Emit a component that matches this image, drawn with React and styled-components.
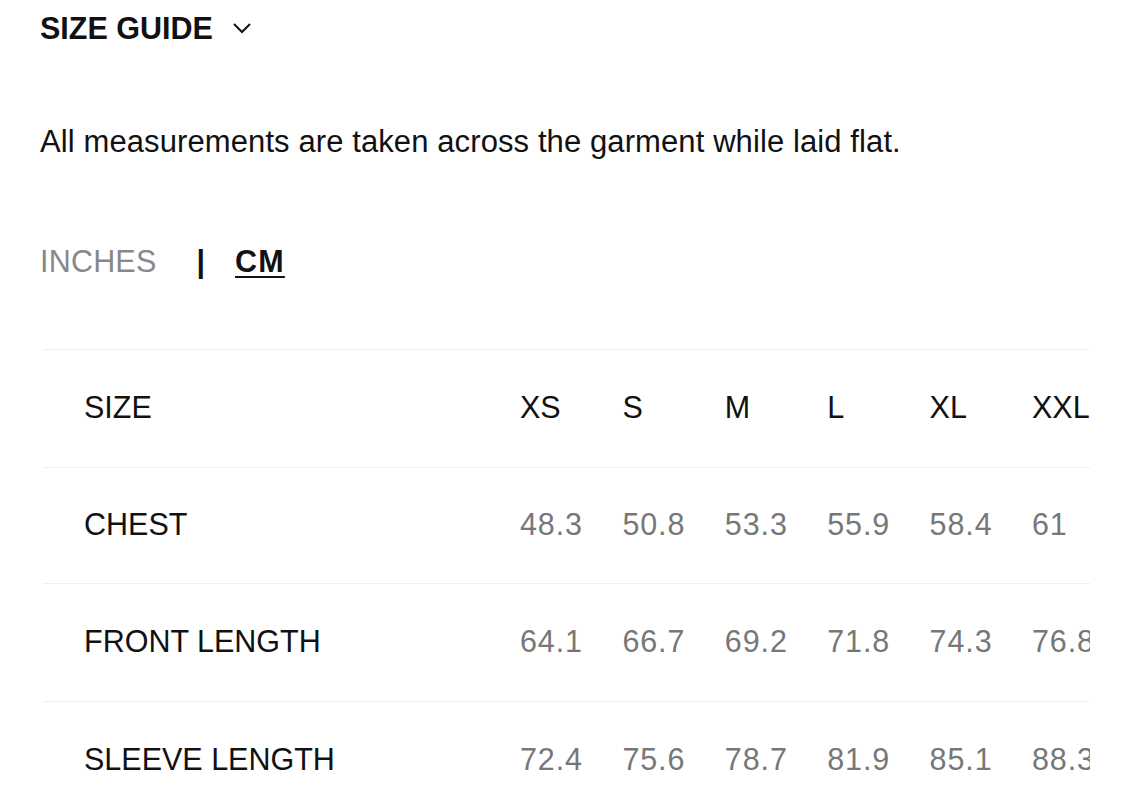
import React from "react";
import styled, { createGlobalStyle } from "styled-components";

const Global = createGlobalStyle`
  html, body { margin: 0; padding: 0; background: #fff; }
  body { font-family: "Liberation Sans", Arial, Helvetica, sans-serif; color: #111; }
`;

const Page = styled.div`
  padding: 0 0 0 40px;
  width: 1125px;
  box-sizing: border-box;
  overflow: hidden;
`;

const Header = styled.button`
  display: flex;
  align-items: center;
  gap: 19px;
  height: 56px;
  padding: 0;
  border: none;
  background: none;
  font-family: inherit;
  font-size: 30.5px;
  font-weight: 700;
  letter-spacing: 0;
  color: #111;
  cursor: pointer;
`;

const Note = styled.p`
  margin: 68px 0 0;
  font-size: 31px;
  line-height: 36px;
  letter-spacing: 0.1px;
  color: #111;
`;

const Units = styled.div`
  display: flex;
  align-items: center;
  margin-top: 83px;
  height: 36px;
  font-size: 30.5px;
`;

const Unit = styled.span`
  color: ${(p) => (p.$active ? "#111" : "#888")};
  font-weight: ${(p) => (p.$active ? 700 : 400)};
  text-decoration: ${(p) => (p.$active ? "underline" : "none")};
  text-decoration-thickness: 2px;
  text-underline-offset: 4px;
  letter-spacing: ${(p) => (p.$active ? "1.2px" : "0.2px")};
`;

const Divider = styled.span`
  font-weight: 700;
  color: #111;
  margin: 0 30px 0 40px;
`;

const TableWrap = styled.div`
  margin: 70px 0 0 3px;
  width: 1047px;
  overflow: hidden;
`;

const Row = styled.div`
  display: grid;
  grid-template-columns: 477px repeat(6, 102.4px);
  align-items: center;
  box-sizing: border-box;
  height: ${(p) => p.$h}px;
  padding-bottom: 3px;
  border-top: 1px solid #efefef;
  width: 1092px;
  font-size: 30.5px;
`;

const Label = styled.div`
  padding-left: 41px;
  color: #111;
  letter-spacing: 0;
`;

const Cell = styled.div`
  color: ${(p) => (p.$head ? "#111" : "#777")};
  white-space: nowrap;
  letter-spacing: ${(p) => (p.$head ? "0" : "0.9px")};
`;

const Chevron = () => (
  <svg width="20" height="14" viewBox="0 0 20 14" fill="none">
    <path d="M2 3 L10 11 L18 3" stroke="#111" strokeWidth="2" />
  </svg>
);

const sizes = ["XS", "S", "M", "L", "XL", "XXL"];
const rows = [
  { label: "CHEST", values: ["48.3", "50.8", "53.3", "55.9", "58.4", "61"], h: 116 },
  { label: "FRONT LENGTH", values: ["64.1", "66.7", "69.2", "71.8", "74.3", "76.8"], h: 118 },
  { label: "SLEEVE LENGTH", values: ["72.4", "75.6", "78.7", "81.9", "85.1", "88.3"], h: 118 },
];

export default function App() {
  return (
    <Page>
      <Global />
      <Header>
        SIZE GUIDE <Chevron />
      </Header>
      <Note>All measurements are taken across the garment while laid flat.</Note>
      <Units>
        <Unit>INCHES</Unit>
        <Divider>|</Divider>
        <Unit $active>CM</Unit>
      </Units>
      <TableWrap>
        <Row $h={118}>
          <Label>SIZE</Label>
          {sizes.map((s) => (
            <Cell key={s} $head>
              {s}
            </Cell>
          ))}
        </Row>
        {rows.map((r) => (
          <Row key={r.label} $h={r.h}>
            <Label>{r.label}</Label>
            {r.values.map((v, i) => (
              <Cell key={i}>{v}</Cell>
            ))}
          </Row>
        ))}
      </TableWrap>
    </Page>
  );
}
